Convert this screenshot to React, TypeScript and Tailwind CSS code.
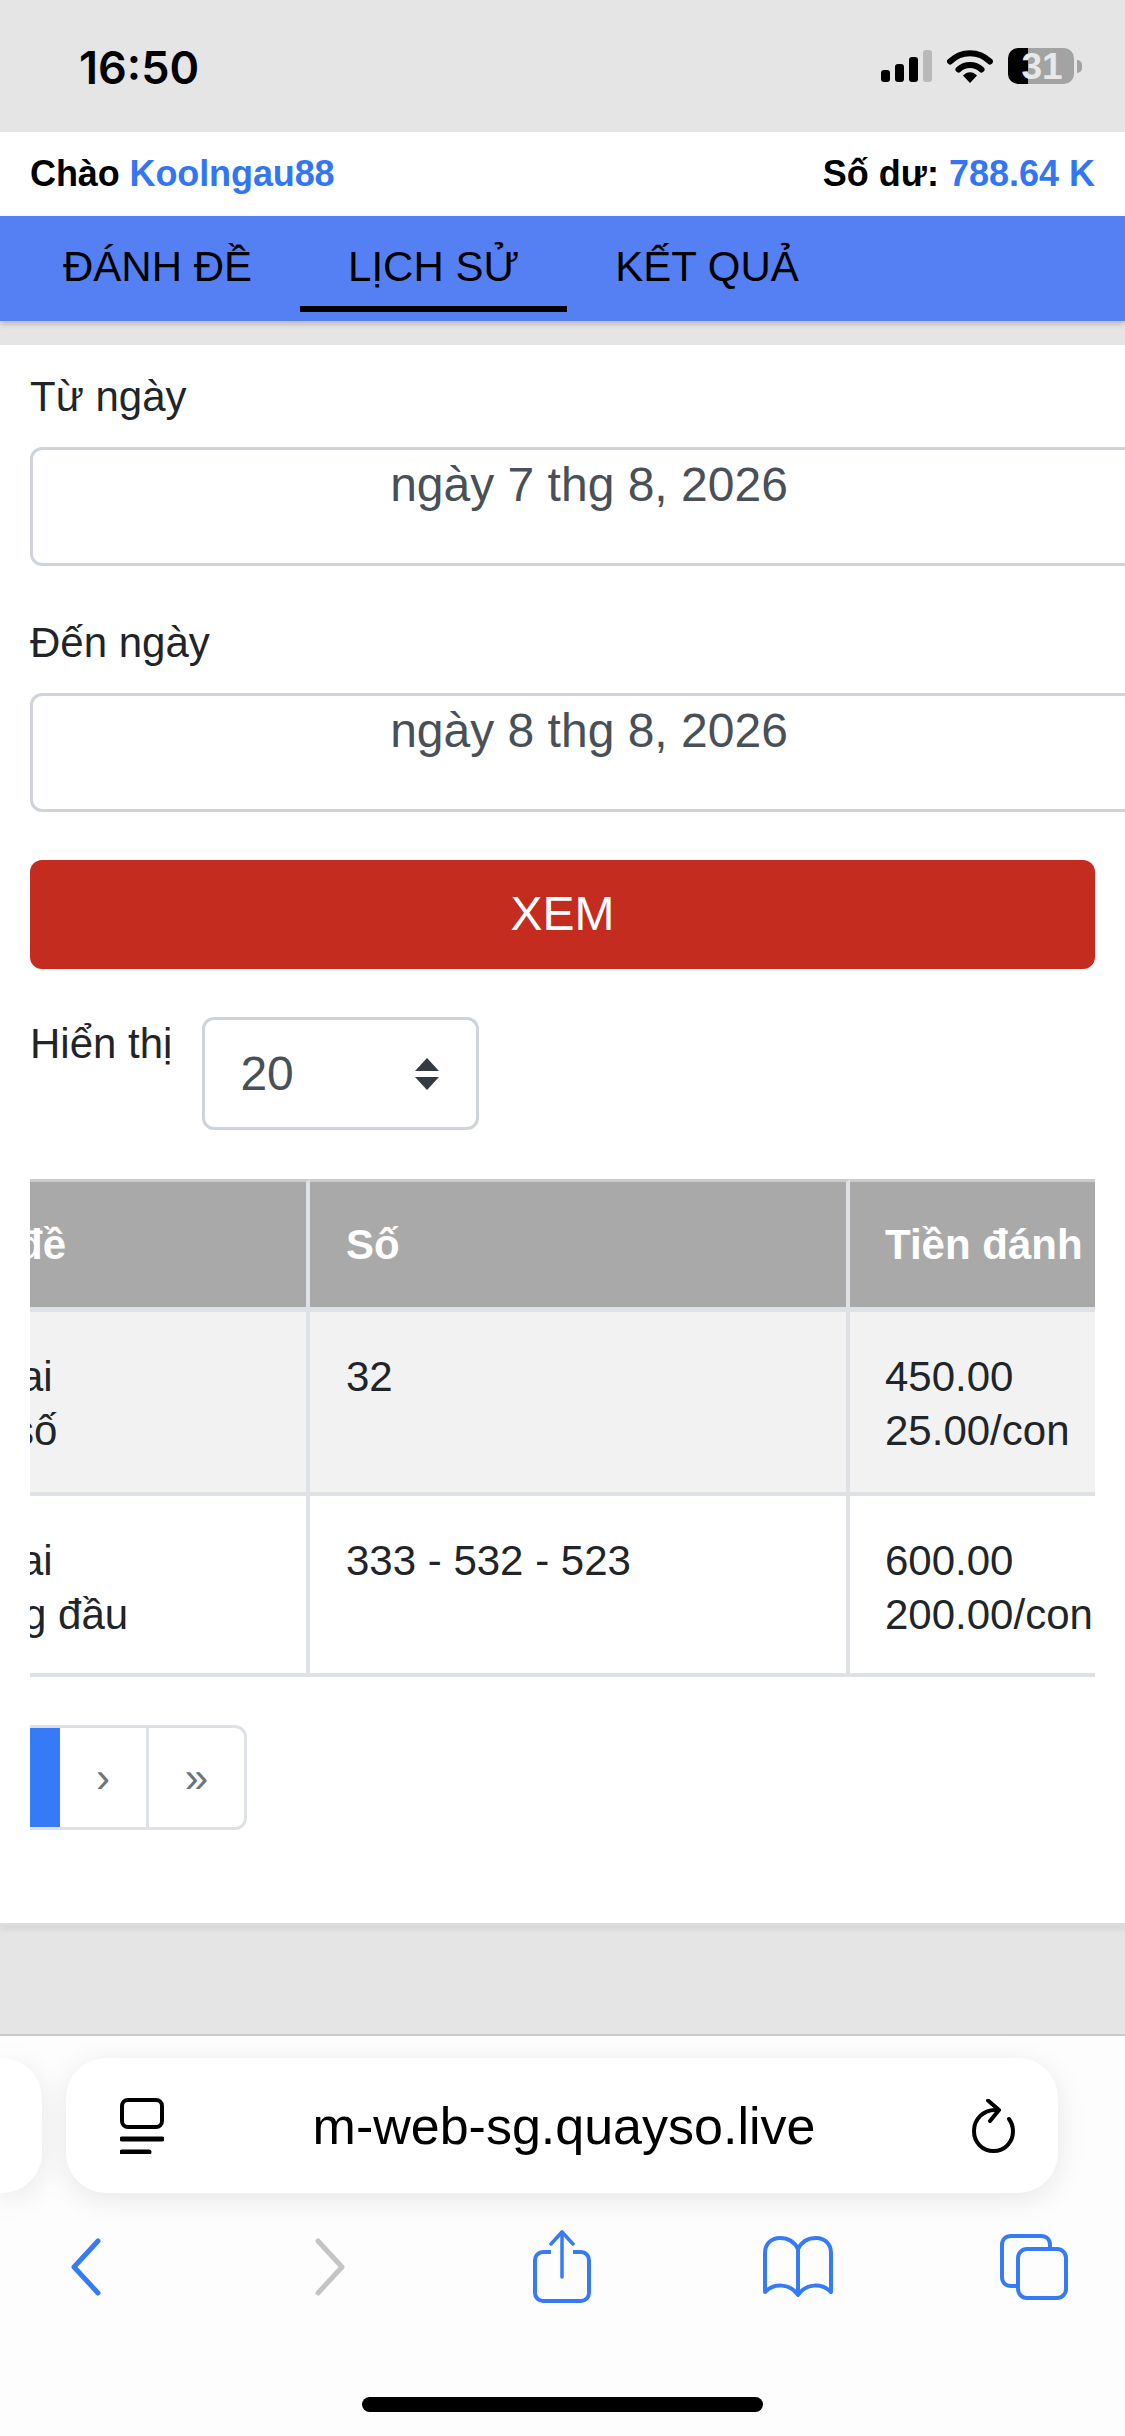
const rows = [
  { type: ['ai', 'số'], offset: ['-ml-[10px]', '-ml-[17px]'], num: '32', money: '450.00', unit: '25.00/con', bg: 'bg-[#f2f2f2]', h: 'h-[184px]' },
  { type: ['ai', 'g đầu'], offset: ['-ml-[10px]', '-ml-[7px]'], num: '333 - 532 - 523', money: '600.00', unit: '200.00/con', bg: 'bg-white', h: 'h-[181px]' },
]

function StatusBar() {
  return (
    <div className="flex h-[132px] items-center justify-between bg-[#e5e5e5] pl-[79px] pr-[43px]">
      <span className="pt-[3px] font-['Inter',sans-serif] text-[45px] leading-none font-semibold text-black">16:50</span>
      <div className="flex items-center gap-[15px]">
        <svg width="51" height="32" viewBox="0 0 51 32">
          <rect x="0" y="20" width="9" height="12" rx="3" fill="#000" />
          <rect x="14" y="14" width="9" height="18" rx="3" fill="#000" />
          <rect x="28" y="7" width="9" height="25" rx="3" fill="#000" />
          <rect x="42" y="0" width="9" height="32" rx="3" fill="#b9b9b9" />
        </svg>
        <svg width="46" height="34" viewBox="0 0 46 34" fill="none">
          <path d="M3 12.5C14.5 1.5 31.5 1.5 43 12.5" stroke="#000" strokeWidth="6" strokeLinecap="round" />
          <path d="M11.5 20.5C18 14.5 28 14.5 34.5 20.5" stroke="#000" strokeWidth="6" strokeLinecap="round" />
          <path d="M16 26.5C20 22 26 22 30 26.5L23 34Z" fill="#000" />
        </svg>
        <div className="flex items-center gap-[3px]">
          <div className="flex h-[36px] w-[66px] items-center justify-center rounded-[10px] bg-[linear-gradient(90deg,#000_30%,#a3a3a3_30%)] pl-[2px] text-[37px] leading-none font-bold text-[#e8e8e8]">
            31
          </div>
          <div className="h-[13px] w-[5px] rounded-r-full bg-[#a3a3a3]" />
        </div>
      </div>
    </div>
  )
}

function DateField({ label, value, gap }: { label: string; value: string; gap: string }) {
  return (
    <div className={gap}>
      <div className="mb-[23px] pt-[1px] text-[42px] leading-[54px] text-[#212529]">{label}</div>
      <div className="h-[119px] w-[1118px] rounded-[12px] border-[3px] border-[#ced4da] pt-[8px] text-center text-[48px] leading-[54px] text-[#495057]">
        {value}
      </div>
    </div>
  )
}

function BottomBar() {
  return (
    <div className="flex-1 border-t-2 border-[#c9c9c9] bg-[#fdfdfd]">
      <div className="flex gap-[24px] pt-[22px]">
        <div className="h-[135px] w-[42px] rounded-r-[40px] bg-white shadow-[0_6px_30px_rgba(0,0,0,0.09)]" />
        <div className="flex h-[135px] w-[992px] items-center justify-between rounded-[40px] bg-white pl-[54px] pr-[43px] shadow-[0_6px_30px_rgba(0,0,0,0.09)]">
          <svg width="44" height="56" viewBox="0 0 44 56" fill="none">
            <rect x="2" y="2" width="40" height="27" rx="6" stroke="#000" strokeWidth="4" />
            <path d="M2 41H42" stroke="#000" strokeWidth="5" strokeLinecap="round" />
            <path d="M2 54H29" stroke="#000" strokeWidth="5" strokeLinecap="round" />
          </svg>
          <span className="-ml-[8px] text-[52px] leading-none text-black">m-web-sg.quayso.live</span>
          <svg width="43" height="54" viewBox="0 0 43 54" fill="none">
            <path d="M23 11C11 11 2 20.5 2 32C2 43.5 10.5 52 21.5 52C32.5 52 41 43.5 41 32C41 27.5 39.5 23.5 37 20" stroke="#000" strokeWidth="4" strokeLinecap="round" />
            <path d="M16 1.5L27 11L18 22" stroke="#000" strokeWidth="4" strokeLinecap="round" strokeLinejoin="round" />
          </svg>
        </div>
      </div>

      <div className="-ml-[36px] mt-[36px] flex h-[75px] items-center">
        <div className="flex w-[244px] shrink-0 justify-center">
          <svg width="30" height="58" viewBox="0 0 30 58" fill="none">
            <path d="M27 3L3 29L27 55" stroke="#367bf5" strokeWidth="5" strokeLinecap="round" strokeLinejoin="round" />
          </svg>
        </div>
        <div className="flex w-[244px] shrink-0 justify-center">
          <svg width="30" height="58" viewBox="0 0 30 58" fill="none">
            <path d="M3 3L27 29L3 55" stroke="#c4c4c4" strokeWidth="5" strokeLinecap="round" strokeLinejoin="round" />
          </svg>
        </div>
        <div className="flex w-[220px] shrink-0 justify-center">
          <svg width="58" height="73" viewBox="0 0 58 73" fill="none">
            <path d="M18 22H10C5.5 22 2 25.5 2 30V63C2 67.5 5.5 71 10 71H48C52.5 71 56 67.5 56 63V30C56 25.5 52.5 22 48 22H40" stroke="#367bf5" strokeWidth="4" />
            <path d="M29 2V47" stroke="#367bf5" strokeWidth="3.5" strokeLinecap="round" />
            <path d="M18 14L29 2L40 14" stroke="#367bf5" strokeWidth="3.5" strokeLinecap="round" strokeLinejoin="round" />
          </svg>
        </div>
        <div className="flex w-[252px] shrink-0 justify-center">
          <svg width="72" height="62" viewBox="0 0 72 62" fill="none">
            <path d="M36 13C32 5 26 2 18 2C9 2 3 8 3 17V56C12 47 28 47 36 59C44 47 60 47 69 56V17C69 8 63 2 54 2C46 2 40 5 36 13Z" stroke="#367bf5" strokeWidth="4" strokeLinejoin="round" />
            <path d="M36 13V59" stroke="#367bf5" strokeWidth="4" />
          </svg>
        </div>
        <div className="flex w-[220px] shrink-0 justify-center">
          <svg width="68" height="66" viewBox="0 0 68 66" fill="none">
            <path d="M50 14V11C50 5.5 46.5 2 41 2H11C5.5 2 2 5.5 2 11V43C2 48.5 5.5 52 11 52H18" stroke="#367bf5" strokeWidth="4" />
            <rect x="18" y="15" width="48" height="49" rx="9" stroke="#367bf5" strokeWidth="4" />
          </svg>
        </div>
      </div>

      <div className="mt-[93px] flex justify-center">
        <div className="h-[15px] w-[401px] rounded-full bg-black" />
      </div>
    </div>
  )
}

export default function App() {
  return (
    <div className="flex h-[2436px] w-[1125px] flex-col overflow-hidden bg-[#e5e5e5] font-['Liberation_Sans',Arial,sans-serif]">
      <StatusBar />

      <div className="flex h-[84px] items-center justify-between bg-white px-[30px] text-[36px] font-bold text-black">
        <div className="tracking-[-0.1px]">
          Chào <span className="text-[#3276f5]">Koolngau88</span>
        </div>
        <div>
          Số dư: <span className="text-[#3276f5]">788.64 K</span>
        </div>
      </div>

      <div className="relative flex h-[105px] bg-[#5480f3] pl-[15px] text-[42px] text-black shadow-[0_3px_6px_rgba(0,0,0,0.2)]">
        <div className="px-[48px] pt-[24px] leading-[54px]">ĐÁNH ĐỀ</div>
        <div className="mb-[9px] border-b-[6px] border-black px-[48px] pt-[24px] leading-[54px]">LỊCH SỬ</div>
        <div className="px-[48px] pt-[24px] leading-[54px]">KẾT QUẢ</div>
      </div>

      <div className="mt-[24px] h-[1581px] border-b-[3px] border-[#dcdcdc] bg-white px-[30px] pt-[24px] shadow-[0_3px_6px_rgba(0,0,0,0.08)]">
        <DateField label="Từ ngày" value="ngày 7 thg 8, 2026" gap="mb-[49px]" />
        <DateField label="Đến ngày" value="ngày 8 thg 8, 2026" gap="mb-[48px]" />

        <div className="mb-[48px] flex h-[109px] items-center justify-center rounded-[12px] bg-[#c42c20] pb-[2px] text-[48px] text-white">
          XEM
        </div>

        <div className="mb-[49px] flex items-start gap-[30px]">
          <div className="text-[42px] leading-[54px] text-[#212529]">Hiển thị</div>
          <div className="flex h-[113px] w-[277px] items-center justify-between rounded-[12px] border-[3px] border-[#ced4da] pl-[35px] pr-[37px] text-[48px] text-[#495057]">
            <span>20</span>
            <svg width="24" height="32" viewBox="0 0 24 32">
              <path d="M12 0L24 13H0Z" fill="#343a40" />
              <path d="M12 32L24 19H0Z" fill="#343a40" />
            </svg>
          </div>
        </div>

        <div className="overflow-hidden">
          <table className="w-[1165px] table-fixed border-separate border-spacing-0 text-[42px] leading-[54px] text-[#212529]">
            <thead>
              <tr className="h-[133px] bg-[#a9a9a9] text-left font-bold text-white">
                <th className="w-[280px] border-t-[3px] border-r-4 border-b-[5px] border-t-[#c9cbcd] border-r-[#dee2e6] border-b-[#dee2e6]">
                  <div className="-ml-[13px]">đề</div>
                </th>
                <th className="w-[540px] border-t-[3px] border-r-4 border-b-[5px] border-t-[#c9cbcd] border-r-[#dee2e6] border-b-[#dee2e6] pl-[36px]">Số</th>
                <th className="border-t-[3px] border-b-[5px] border-t-[#c9cbcd] border-b-[#dee2e6] pl-[35px]">Tiền đánh</th>
              </tr>
            </thead>
            <tbody>
              {rows.map((row) => (
                <tr key={row.num} className={`${row.bg} ${row.h}`}>
                  <td className="border-r-4 border-b-4 border-[#dee2e6] pt-[38px] align-top">
                    <div className={row.offset[0]}>{row.type[0]}</div>
                    <div className={row.offset[1]}>{row.type[1]}</div>
                  </td>
                  <td className="border-r-4 border-b-4 border-[#dee2e6] pt-[38px] pl-[36px] align-top">{row.num}</td>
                  <td className="border-b-4 border-[#dee2e6] pt-[38px] pl-[35px] align-top">
                    <div>{row.money}</div>
                    <div>{row.unit}</div>
                  </td>
                </tr>
              ))}
            </tbody>
          </table>
        </div>

        <div className="mt-[48px] flex h-[105px] w-[217px] overflow-hidden rounded-r-[12px] border-y-[3px] border-r-[3px] border-[#dee2e6] text-[42px] text-[#6c757d]">
          <div className="-my-[3px] w-[30px] bg-[#367bf5]" />
          <div className="flex w-[86px] items-center justify-center">›</div>
          <div className="flex flex-1 items-center justify-center border-l-[3px] border-[#dee2e6]">»</div>
        </div>
      </div>

      <div className="h-[108px]" />
      <BottomBar />
    </div>
  )
}
